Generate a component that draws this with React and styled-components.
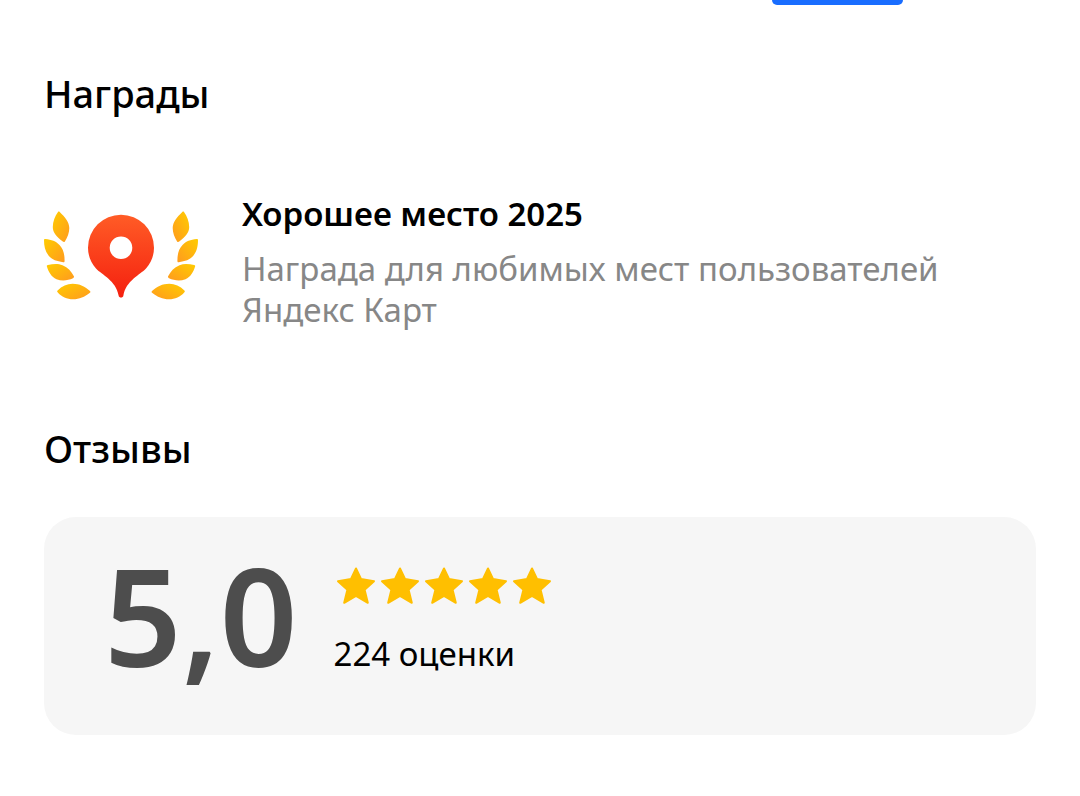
import React from "react";
import styled, { createGlobalStyle } from "styled-components";

const GlobalStyle = createGlobalStyle`
  * { box-sizing: border-box; }
  body {
    margin: 0;
    background: #fff;
    color: #000;
    font-family: "Noto Sans", "Open Sans", sans-serif;
  }
`;

const Page = styled.main`
  padding: 0 44px 60px;
`;

const TabBar = styled.div`
  display: flex;
  justify-content: flex-end;
  padding-right: 133px;
`;

const TabIndicator = styled.div`
  width: 131px;
  height: 5px;
  border-radius: 0 0 6px 6px;
  background: #196dff;
`;

const Section = styled.section`
  padding-top: ${({ $top }) => $top}px;
`;

const Heading = styled.h2`
  margin: 0;
  font-size: 38px;
  line-height: 48px;
  font-weight: 500;
`;

const Award = styled.article`
  display: flex;
  align-items: flex-start;
  gap: 42px;
  padding-top: 76px;
`;

const AwardIcon = styled.svg`
  flex: none;
  width: 156px;
  height: 89px;
  margin-top: 18px;
`;

const AwardTitle = styled.h3`
  margin: 0;
  font-size: 33px;
  line-height: 41px;
  font-weight: 600;
`;

const AwardText = styled.p`
  margin: 14px 0 0;
  color: #878787;
  font-size: 33px;
  line-height: 41px;
`;

const RatingCard = styled.div`
  display: flex;
  align-items: flex-start;
  gap: 36px;
  margin-top: 45px;
  padding: 28px 60px 50px;
  border-radius: 32px;
  background: #f6f6f6;
`;

const Score = styled.div`
  color: #4d4d4d;
  font-size: 136px;
  line-height: 140px;
  font-weight: 600;
`;

const RatingDetails = styled.div`
  padding-top: 19px;
`;

const Stars = styled.div`
  display: flex;
`;

const StarIcon = styled.svg`
  width: 44px;
  height: 44px;
`;

const RatingCount = styled.div`
  margin-top: 25px;
  font-size: 33px;
  line-height: 41px;
`;

function Leaves() {
  return (
    <>
      <path d="M14 .9C14.400 .3 15.200 .3 15.700 .9C21 6 25.300 11 25.300 17C25.300 22 23.500 26 20.900 30.400C20.400 31.200 19.500 31.200 18.800 30.600C12.500 25.500 8.800 21.500 8.800 16C8.800 10.500 11 5 14 .9Z" />
      <path d="M0 29C0 28.300 .5 27.800 1.300 27.900C7.500 28.500 12 30 15.500 34C19.500 38.500 20.600 43 20.600 50C20.600 50.900 20 51.400 19.200 51.200C13 50.200 8 49 4.500 44.500C1 40 0 35 0 29Z" />
      <path d="M2.900 55.500C2.600 54.600 3 54.100 3.900 53.900C9 53 14 52.400 18.500 54.200C24 56.400 27.500 60.500 29.900 65.300C30.200 66.100 29.900 66.800 29 67.200C24 69.500 18 70.300 12.500 68.200C7.500 66 4.500 61 2.900 55.500Z" />
      <path d="M13.600 81.300C13 80.700 13 80.100 13.600 79.500C18 75 23 72.700 28.700 72.700C35.500 72.700 41 75.500 46 80C46.600 80.600 46.500 81.300 45.900 81.800C40.500 86 35.500 88.300 29 88.300C23 88.300 17.500 86 13.600 81.300Z" />
    </>
  );
}

function LaurelPin() {
  return (
    <AwardIcon viewBox="0 0 156 89" aria-hidden="true">
      <defs>
        <linearGradient id="pin" x1="0" y1="0" x2="0" y2="1">
          <stop offset="0" stopColor="#ff5c26" />
          <stop offset="1" stopColor="#f5200f" />
        </linearGradient>
        <linearGradient id="leaf" x1="0" y1="0" x2="1" y2="1">
          <stop offset="0" stopColor="#ffcc00" />
          <stop offset="1" stopColor="#ff9a1f" />
        </linearGradient>
      </defs>
      <g fill="url(#leaf)">
        <Leaves />
      </g>
      <g fill="url(#leaf)" transform="translate(154 0) scale(-1 1)">
        <Leaves />
      </g>
      <path
        fill="url(#pin)"
        fillRule="evenodd"
        d="M77 3.700A33 33 0 0 0 44 36.700C44 45 47 51.500 52 57.500C58 64 72 69.500 74.600 84.500C74.900 87.300 79.100 87.300 79.400 84.500C82 69.500 96 64 102 57.500C107 51.500 110 45 110 36.700A33 33 0 0 0 77 3.700ZM77 25.500a11.300 11.300 0 1 1 0 22.600a11.300 11.300 0 1 1 0-22.600Z"
      />
    </AwardIcon>
  );
}

function Star() {
  return (
    <StarIcon viewBox="0 0 44 44" aria-hidden="true">
      <path
        fill="#ffbf00"
        stroke="#ffbf00"
        strokeWidth="2"
        strokeLinejoin="round"
        d="M22 4.500L27 15L40 17.200L30.600 25.700L33.800 38.800L22 32L10.200 38.800L13.400 25.700L4 17.200L17 15Z"
      />
    </StarIcon>
  );
}

export default function App() {
  return (
    <>
      <GlobalStyle />
      <Page>
        <TabBar>
          <TabIndicator />
        </TabBar>
        <Section $top={64}>
          <Heading>Награды</Heading>
          <Award>
            <LaurelPin />
            <div>
              <AwardTitle>Хорошее место 2025</AwardTitle>
              <AwardText>Награда для любимых мест пользователей Яндекс Карт</AwardText>
            </div>
          </Award>
        </Section>
        <Section $top={94}>
          <Heading>Отзывы</Heading>
          <RatingCard>
            <Score>5,0</Score>
            <RatingDetails>
              <Stars role="img" aria-label="5 из 5">
                {[1, 2, 3, 4, 5].map((n) => (
                  <Star key={n} />
                ))}
              </Stars>
              <RatingCount>224 оценки</RatingCount>
            </RatingDetails>
          </RatingCard>
        </Section>
      </Page>
    </>
  );
}
